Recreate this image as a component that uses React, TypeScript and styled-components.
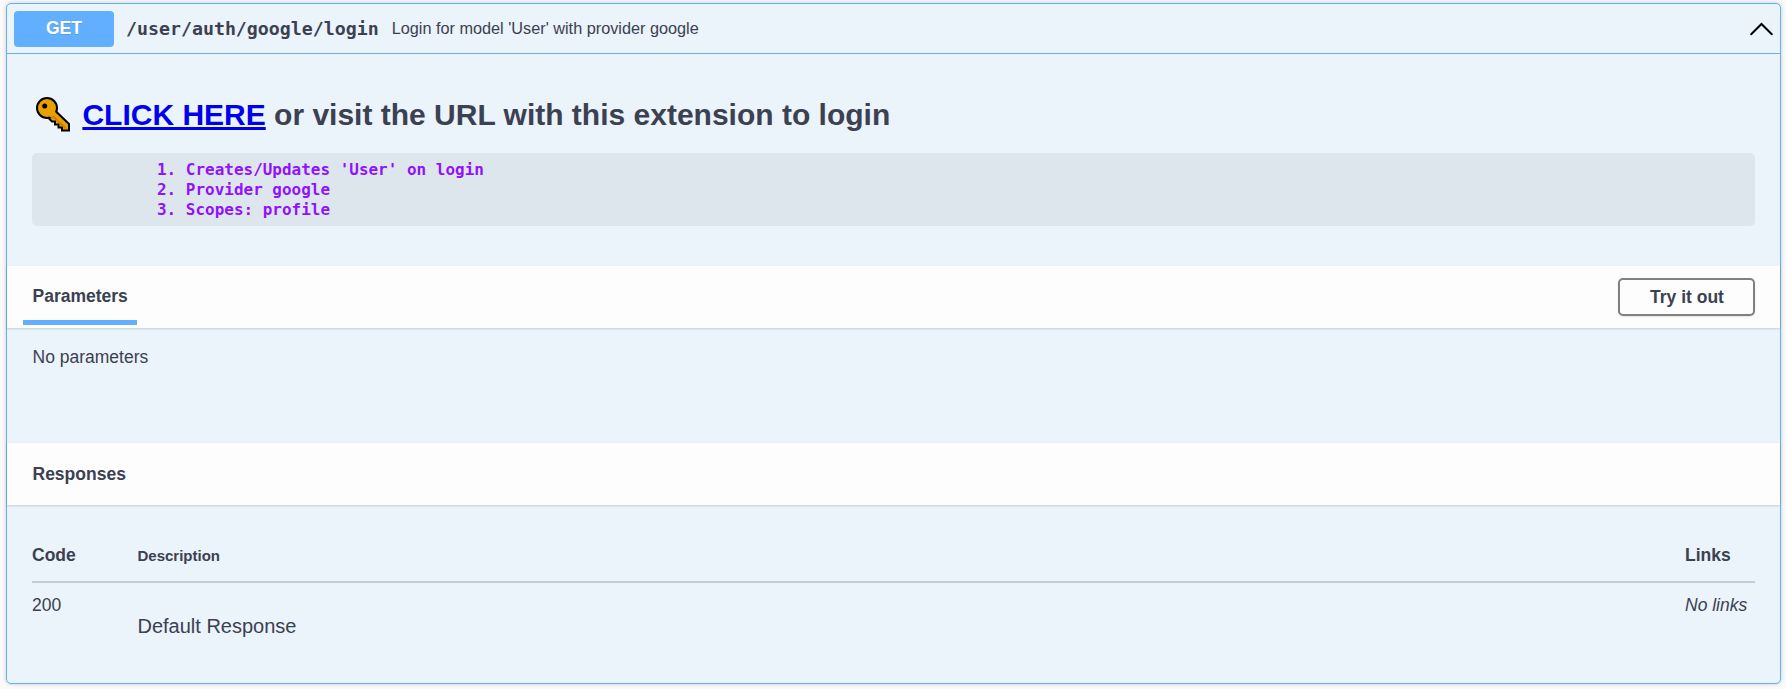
import React from 'react';
import styled, { createGlobalStyle } from 'styled-components';

const GlobalStyle = createGlobalStyle`
  * { box-sizing: border-box; }
  body {
    margin: 0;
    background: #fafafa;
    color: #3b4151;
    font-family: 'Liberation Sans', Arial, sans-serif;
  }
`;

const Page = styled.main`
  height: 689px;
  padding: 3px 5px 5px 6px;
  overflow: hidden;
`;

const Operation = styled.section`
  height: 681px;
  border: 1px solid #61affe;
  border-radius: 5px;
  background: #ebf3fb;
  box-shadow: 0 0 4px rgba(0, 0, 0, 0.19);
`;

const Summary = styled.header`
  display: flex;
  align-items: center;
  height: 50px;
  padding: 0 7px;
  border-bottom: 1px solid #61affe;
`;

const Method = styled.span`
  width: 100px;
  height: 36px;
  border-radius: 4px;
  background: #61affe;
  color: #fff;
  font-size: 17.5px;
  font-weight: 700;
  line-height: 34px;
  text-align: center;
  text-shadow: 0 1px 0 rgba(0, 0, 0, 0.1);
`;

const Path = styled.span`
  padding: 0 13px 0 12px;
  font-family: 'DejaVu Sans Mono', monospace;
  font-size: 18.25px;
  font-weight: 700;
  line-height: 24px;
`;

const SummaryText = styled.span`
  flex: 1;
  font-size: 16.25px;
  line-height: 20px;
  margin-bottom: 1px;
`;

const Arrow = styled.svg`
  width: 23px;
  height: 14px;
`;

const Description = styled.div`
  height: 212px;
  padding: 39px 25px 0;
`;

const Title = styled.h1`
  display: flex;
  align-items: center;
  height: 44px;
  margin: 0;
  font-size: 30px;
  line-height: 44px;
  white-space: pre;
`;

const KeyIcon = styled.svg`
  width: 36px;
  height: 36px;
  margin: 0 12.4px 2px 2px;
`;

const Link = styled.a`
  color: #0000ee;
`;

const Code = styled.pre`
  height: 73px;
  margin: 16px 0 0;
  padding: 7px 0 0 125px;
  border-radius: 5px;
  background: #dee6ed;
  color: #9012fe;
  font-family: 'DejaVu Sans Mono', monospace;
  font-size: 15.97px;
  font-weight: 700;
  line-height: 20px;
`;

const SectionBar = styled.div`
  display: flex;
  align-items: center;
  justify-content: space-between;
  height: 62px;
  padding: 0 25px;
  background: #fdfdfe;
  box-shadow: 0 1px 2px rgba(0, 0, 0, 0.16);
`;

const Tab = styled.h4<{ $active?: boolean }>`
  align-self: flex-start;
  height: 59px;
  margin: 0 0 0 -9px;
  padding: 0 9px 0 9.5px;
  border-bottom: 5px solid ${({ $active }) => ($active ? '#61affe' : 'transparent')};
  font-size: 17.5px;
  line-height: ${({ $active }) => ($active ? '60px' : '62px')};
`;

const TryButton = styled.button`
  width: 137px;
  height: 38px;
  padding: 0 0 0 1px;
  border: 2px solid #808080;
  border-radius: 5px;
  background: transparent;
  box-shadow: 0 1px 2px rgba(0, 0, 0, 0.1);
  color: #3b4151;
  font: 700 17.5px/32px 'Liberation Sans', Arial, sans-serif;
`;

const EmptyParameters = styled.p`
  height: 115px;
  margin: 0;
  padding: 18px 25px 0 25.5px;
  font-size: 17.5px;
  line-height: 22px;
`;

const Table = styled.div`
  padding: 26px 25px 0;
`;

const Row = styled.div<{ $head?: boolean }>`
  display: grid;
  grid-template-columns: 105.5px 1fr 70px;
  height: ${({ $head }) => ($head ? '52px' : '80px')};
  border-bottom: ${({ $head }) => ($head ? '2px solid #c4cbd7' : '0')};
  font-size: 17.5px;
  font-weight: ${({ $head }) => ($head ? 700 : 400)};
  line-height: 22px;
  padding-top: ${({ $head }) => ($head ? '13px' : '11px')};
`;

const SmallHeading = styled.span`
  font-size: 15px;
  line-height: 24px;
`;

const ResponseText = styled.span`
  padding-top: 21px;
  font-size: 20px;
`;

export default function App() {
  return (
    <>
      <GlobalStyle />
      <Page>
        <Operation>
          <Summary>
            <Method>GET</Method>
            <Path>/user/auth/google/login</Path>
            <SummaryText>Login for model 'User' with provider google</SummaryText>
            <Arrow viewBox="0 0 23 14" fill="none" stroke="#000" strokeWidth="2">
              <path d="M1.2 12.2 11.5 2 21.8 12.2" strokeLinecap="round" />
            </Arrow>
          </Summary>
          <Description>
            <Title>
              <KeyIcon viewBox="0 0 36 36">
                <path
                  d="M21 14.5 35 28V34.5H28V31.5H24.5V28.5H21V25.5H18L14 21.5"
                  fill="#e8a000"
                  stroke="#000"
                  strokeWidth="2"
                />
                <circle cx="13" cy="12" r="10" fill="#e8a000" stroke="#000" strokeWidth="2" />
                <path d="M17 16 21 15.8 23 18.5 19 23 15 20Z" fill="#e8a000" />
                <path d="M18.5 20 31.5 32" stroke="#c98200" strokeWidth="1.8" />
                <circle cx="10.7" cy="10" r="2.5" />
              </KeyIcon>
              <Link href="#">CLICK HERE</Link>
              <span> or visit the URL with this extension to login</span>
            </Title>
            <Code>{"1. Creates/Updates 'User' on login\n2. Provider google\n3. Scopes: profile"}</Code>
          </Description>
          <SectionBar>
            <Tab $active>Parameters</Tab>
            <TryButton>Try it out</TryButton>
          </SectionBar>
          <EmptyParameters>No parameters</EmptyParameters>
          <SectionBar>
            <Tab>Responses</Tab>
          </SectionBar>
          <Table>
            <Row $head>
              <span>Code</span>
              <SmallHeading>Description</SmallHeading>
              <span>Links</span>
            </Row>
            <Row>
              <span>200</span>
              <ResponseText>Default Response</ResponseText>
              <em>No links</em>
            </Row>
          </Table>
        </Operation>
      </Page>
    </>
  );
}
